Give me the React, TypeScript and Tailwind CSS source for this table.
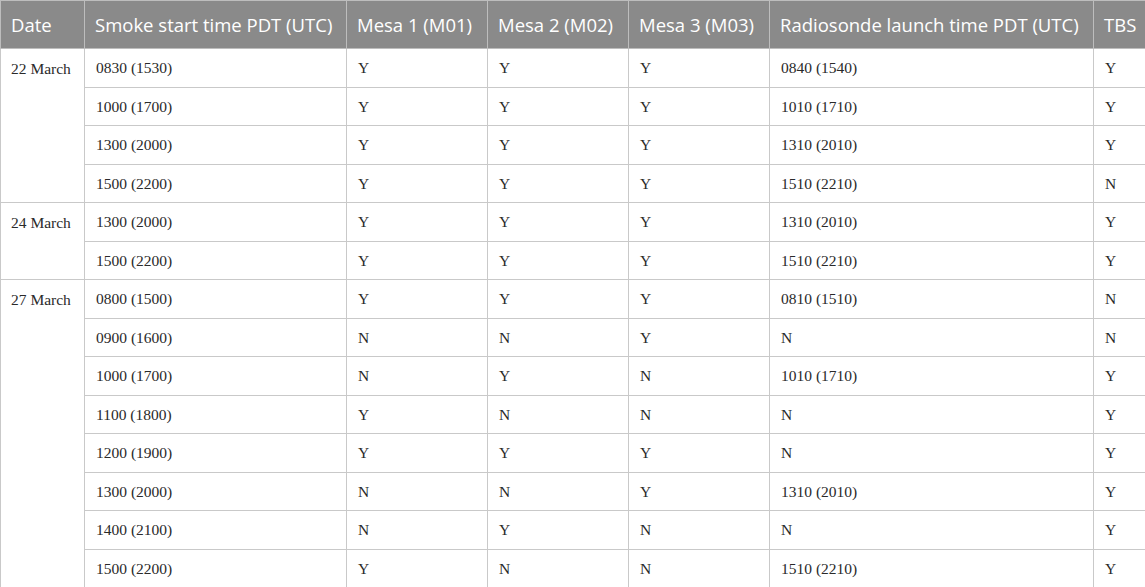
import React from "react";

const groups: { date: string; rows: string[][] }[] = [
  {
    date: "22 March",
    rows: [
      ["0830 (1530)", "Y", "Y", "Y", "0840 (1540)", "Y"],
      ["1000 (1700)", "Y", "Y", "Y", "1010 (1710)", "Y"],
      ["1300 (2000)", "Y", "Y", "Y", "1310 (2010)", "Y"],
      ["1500 (2200)", "Y", "Y", "Y", "1510 (2210)", "N"],
    ],
  },
  {
    date: "24 March",
    rows: [
      ["1300 (2000)", "Y", "Y", "Y", "1310 (2010)", "Y"],
      ["1500 (2200)", "Y", "Y", "Y", "1510 (2210)", "Y"],
    ],
  },
  {
    date: "27 March",
    rows: [
      ["0800 (1500)", "Y", "Y", "Y", "0810 (1510)", "N"],
      ["0900 (1600)", "N", "N", "Y", "N", "N"],
      ["1000 (1700)", "N", "Y", "N", "1010 (1710)", "Y"],
      ["1100 (1800)", "Y", "N", "N", "N", "Y"],
      ["1200 (1900)", "Y", "Y", "Y", "N", "Y"],
      ["1300 (2000)", "N", "N", "Y", "1310 (2010)", "Y"],
      ["1400 (2100)", "N", "Y", "N", "N", "Y"],
      ["1500 (2200)", "Y", "N", "N", "1510 (2210)", "Y"],
    ],
  },
];

const headers = [
  "Date",
  "Smoke start time PDT (UTC)",
  "Mesa 1 (M01)",
  "Mesa 2 (M02)",
  "Mesa 3 (M03)",
  "Radiosonde launch time PDT (UTC)",
  "TBS",
];

const widths = ["w-[84px]", "w-[262px]", "w-[141px]", "w-[141px]", "w-[141px]", "w-[324px]", "w-[52px]"];

export default function App() {
  return (
    <div className="w-[1145px] h-[587px] bg-white overflow-hidden">
      <table className="w-[1145px] table-fixed border-collapse">
        <colgroup>
          {widths.map((w, i) => (
            <col key={i} className={w} />
          ))}
        </colgroup>
        <thead>
          <tr className="h-[48px] bg-[#8a8a8a]">
            {headers.map((h, i) => (
              <th
                key={i}
                className="border border-[#bdbdbd] pl-[10px] pr-0 text-left font-normal text-white text-[18.5px] whitespace-nowrap align-middle"
                style={{ fontFamily: '"Open Sans", sans-serif' }}
              >
                {h}
              </th>
            ))}
          </tr>
        </thead>
        <tbody className="text-[15.5px] text-[#2a2a2a]" style={{ fontFamily: '"Liberation Serif", serif' }}>
          {groups.map((g) =>
            g.rows.map((r, ri) => (
              <tr key={g.date + ri} className="h-[38.5px]">
                {ri === 0 && (
                  <td
                    rowSpan={g.rows.length}
                    className="border border-[#c9c9c9] pl-[10px] align-top pt-[8px] whitespace-nowrap"
                  >
                    {g.date}
                  </td>
                )}
                {r.map((c, ci) => (
                  <td key={ci} className="border border-[#c9c9c9] pl-[11px] align-middle whitespace-pre">
                    {c}
                  </td>
                ))}
              </tr>
            ))
          )}
        </tbody>
      </table>
    </div>
  );
}
